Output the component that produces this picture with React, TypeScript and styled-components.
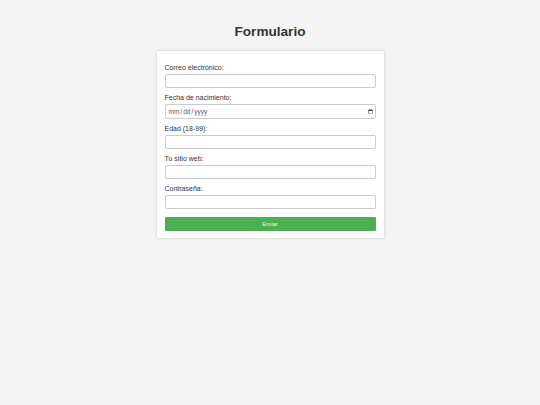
import React from "react";
import styled, { createGlobalStyle } from "styled-components";

const Global = createGlobalStyle`
  html, body { margin: 0; padding: 0; background: #f4f4f4; }
  body { font-family: "Liberation Sans", Arial, sans-serif; color: #333; }
  * { box-sizing: border-box; }
`;

const Page = styled.main`
  min-height: 405px;
  padding-top: 24px;
  display: flex;
  flex-direction: column;
  align-items: center;
`;

const Title = styled.h1`
  margin: 0 0 10.5px;
  font-size: 13.6px;
  line-height: 15.5px;
  font-weight: bold;
  color: #333;
`;

const Card = styled.form`
  width: 229px;
  background: #fff;
  border: 1px solid #e2e2e2;
  border-radius: 2px;
  box-shadow: 0 0 4px rgba(0, 0, 0, 0.06);
  padding: 12.7px 8px 7.6px 8px;
  display: flex;
  flex-direction: column;
`;

const Label = styled.label`
  display: block;
  font-size: 7px;
  line-height: 8px;
  color: #333;
  margin-bottom: 2.6px;
`;

const Input = styled.input<{ $h?: number }>`
  display: block;
  width: 100%;
  height: ${(p) => p.$h ?? 14}px;
  margin: 0 0 5.4px;
  padding: 0 2px;
  border: 1px solid #ccc;
  border-radius: 2px;
  background: #fff;
  font-family: "Liberation Sans", Arial, sans-serif;
  font-size: 6.5px;
  color: #555;
  outline: none;
  &::-webkit-calendar-picker-indicator {
    width: 5px;
    height: 5px;
    padding: 0;
    margin: 0;
  }
`;

const Submit = styled.button`
  margin-top: 2.6px;
  height: 13.4px;
  width: 100%;
  border: none;
  border-radius: 1px;
  background: #4caf50;
  color: #e8f5e9;
  font-family: "Liberation Sans", Arial, sans-serif;
  font-size: 5.5px;
  padding: 0;
  cursor: pointer;
`;

const fields: { id: string; label: string; type: string; h?: number }[] = [
  { id: "email", label: "Correo electrónico:", type: "email" },
  { id: "fecha", label: "Fecha de nacimiento:", type: "date", h: 15 },
  { id: "edad", label: "Edad (18-99):", type: "number" },
  { id: "web", label: "Tu sitio web:", type: "url" },
  { id: "pass", label: "Contraseña:", type: "password" },
];

export default function App() {
  return (
    <>
      <Global />
      <Page>
        <Title>Formulario</Title>
        <Card onSubmit={(e) => e.preventDefault()}>
          {fields.map((f) => (
            <React.Fragment key={f.id}>
              <Label htmlFor={f.id}>{f.label}</Label>
              <Input id={f.id} type={f.type} $h={f.h} />
            </React.Fragment>
          ))}
          <Submit type="submit">Enviar</Submit>
        </Card>
      </Page>
    </>
  );
}
